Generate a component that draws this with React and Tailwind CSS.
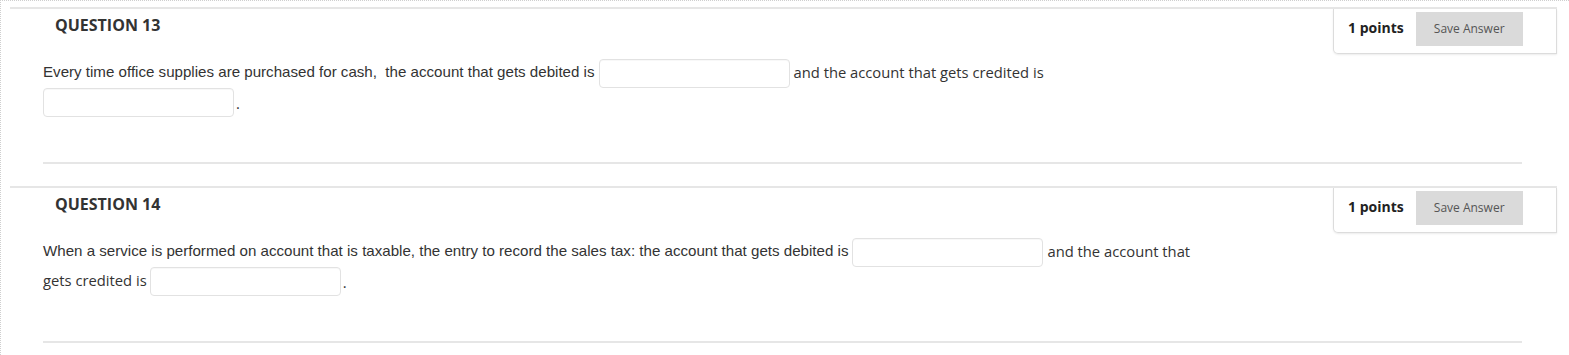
import React from "react";

function Blank() {
  return (
    <span className="inline-block align-middle w-[191px] h-[29px] bg-white border border-[#e2e2e2] rounded-[4px] shadow-[inset_0_1px_1px_rgba(0,0,0,0.03)]" />
  );
}

function Header({ n }) {
  return (
    <div className="flex justify-between h-[45px]">
      <div className="pl-[45px] pt-[5px] text-[16px] leading-[22px] font-bold text-[#333] font-['Open_Sans',sans-serif]">
        QUESTION {n}
      </div>
      <div className="w-[224px] h-[45px] border-l border-b border-r border-[#dcdcdc] rounded-bl-[5px] shadow-[0_1px_2px_rgba(0,0,0,0.08)] flex items-start pt-[3px] pl-[14px]">
        <span className="mt-[6px] text-[14px] leading-[19px] font-bold text-[#222] font-['Open_Sans',sans-serif]">1 points</span>
        <button className="ml-[12px] w-[107px] h-[34px] bg-[#dadada] text-[12px] text-[#555] font-['Open_Sans',sans-serif]">
          Save Answer
        </button>
      </div>
    </div>
  );
}

function Block({ n, children, last }) {
  return (
    <div className={"w-[1547px] border-t-2 border-[#e6e6e6] " + (last ? "" : "mb-[22px]")}>
      <Header n={n} />
      <div className="mt-[4px] pl-[33px] text-[#333]">{children}</div>
      <div className="mt-[45px] ml-[33px] w-[1479px] border-t-2 border-[#e6e6e6]" />
    </div>
  );
}

const arial = "whitespace-pre text-[15.12px] leading-[20px] font-['Liberation_Sans',Arial,sans-serif]";
const open = "whitespace-pre text-[14.75px] leading-[20px] font-['Open_Sans',sans-serif]";

export default function App() {
  return (
    <div className="w-[1569px] h-[355px] overflow-hidden bg-white border-t border-l border-dotted border-[#cfcfcf]">
      <div className="pl-[9px] pt-[6px]">
        <Block n={13}>
          <div className="flex items-center h-[30px]">
            <span className={arial + " -mt-[3px]"}>
              Every time office supplies are purchased for cash,  the account that gets debited is
            </span>
            <span className="ml-[4px] flex"><Blank /></span>
            <span className={open + " ml-[4px] -mt-[3px]"}>and the account that gets credited is</span>
          </div>
          <div className="flex items-center h-[29px]">
            <Blank />
            <span className={open + " ml-[2px]"}>.</span>
          </div>
        </Block>
        <Block n={14} last>
          <div className="flex items-center h-[30px]">
            <span className={arial + " -mt-[3px]"}>
              When a service is performed on account that is taxable, the entry to record the sales tax: the account that gets debited is
            </span>
            <span className="ml-[4px] flex"><Blank /></span>
            <span className={open + " ml-[4px] -mt-[3px]"}>and the account that</span>
          </div>
          <div className="flex items-center h-[29px]">
            <span className={open + " mr-[3px] -mt-[3px]"}>gets credited is</span>
            <Blank />
            <span className={open + " ml-[2px]"}>.</span>
          </div>
        </Block>
      </div>
    </div>
  );
}
